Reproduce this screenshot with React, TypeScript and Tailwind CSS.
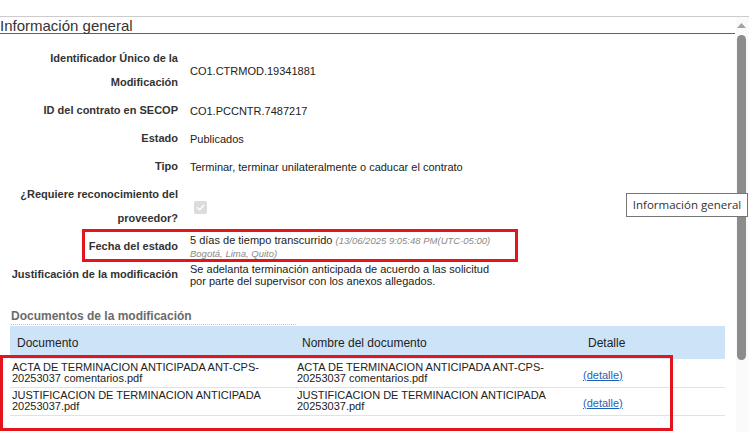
import React from "react"

/**
 * Ficha "Información general" de una modificación de contrato (SECOP).
 * Tabla de etiquetas/valores + tabla de documentos, con las marcas
 * rojas de anotación y el tooltip del navegador encima.
 */

type Field = { label: React.ReactNode; value: React.ReactNode }

const fields: Field[] = [
  { label: "Identificador Único de la Modificación", value: "CO1.CTRMOD.19341881" },
  { label: "ID del contrato en SECOP", value: "CO1.PCCNTR.7487217" },
  { label: "Estado", value: "Publicados" },
  { label: "Tipo", value: "Terminar, terminar unilateralmente o caducar el contrato" },
  {
    label: "¿Requiere reconocimiento del proveedor?",
    value: (
      <span className="ml-[4px] flex h-[13px] w-[13px] items-center justify-center rounded-[2px] bg-[#dcdcdc]">
        <svg width="9" height="9" viewBox="0 0 10 10" fill="none">
          <path d="M1.5 5.2 4 7.6 8.6 2.4" stroke="#ffffff" strokeWidth="1.6" strokeLinecap="round" strokeLinejoin="round" />
        </svg>
      </span>
    ),
  },
  {
    label: "Fecha del estado",
    value: (
      <>
        5 días de tiempo transcurrido{" "}
        <span className="text-[9.5px] italic text-[#8a8a8a]">
          (13/06/2025 9:05:48 PM(UTC-05:00) Bogotá, Lima, Quito)
        </span>
      </>
    ),
  },
  {
    label: "Justificación de la modificación",
    value: "Se adelanta terminación anticipada de acuerdo a las solicitud por parte del supervisor con los anexos allegados.",
  },
]

const docs = [
  {
    doc: "ACTA DE TERMINACION ANTICIPADA ANT-CPS-20253037 comentarios.pdf",
    name: "ACTA DE TERMINACION ANTICIPADA ANT-CPS-20253037 comentarios.pdf",
  },
  {
    doc: "JUSTIFICACION DE TERMINACION ANTICIPADA 20253037.pdf",
    name: "JUSTIFICACION DE TERMINACION ANTICIPADA 20253037.pdf",
  },
]

export default function App() {
  return (
    <div className="relative h-[447px] w-[755px] overflow-hidden bg-white font-['Liberation_Sans',Arial,sans-serif] text-[#222]">
      <div className="h-4" />
      <div className="flex w-[749px] border-t border-[#cccccc]">
        <main className="w-[736px]">
          <h2 className="h-[17px] w-[735px] border-b border-[#2b6cb0] text-[15px] leading-[17px] text-[#333]">
            Información general
          </h2>

          <table className="mt-[10px] border-collapse">
            <tbody>
              {fields.map((f, i) => (
                <tr key={i}>
                  <td className="w-[178px] py-[2px] pl-[8px] text-right align-middle text-[11px] font-bold leading-[24px] text-[#333]">
                    {f.label}
                  </td>
                  <td className="w-[317px] pl-[12px] pt-[2px] align-middle text-[11px] leading-[12px]">{f.value}</td>
                </tr>
              ))}
            </tbody>
          </table>

          <div className="ml-[11px] mt-[20px] w-[285px] border-b border-dotted border-[#c8c8c8] text-[12px] font-bold leading-[16px] text-[#6b6b6b]">
            Documentos de la modificación
          </div>

          <table className="ml-[10px] mt-px w-[715px] table-fixed border-collapse">
            <colgroup>
              <col className="w-[285px]" />
              <col className="w-[286px]" />
              <col className="w-[144px]" />
            </colgroup>
            <thead>
              <tr className="h-[33px] bg-[#cde3f8] text-left text-[12px] font-normal">
                <th className="pl-[7px] font-normal">Documento</th>
                <th className="pl-[7px] font-normal">Nombre del documento</th>
                <th className="pl-[7px] font-normal">Detalle</th>
              </tr>
            </thead>
            <tbody className="text-[11px] leading-[11px]">
              {docs.map((d, i) => (
                <tr key={i} className="h-[28px] border-b border-[#e2e2e2]">
                  <td className="pl-[2px] pr-[12px] align-middle">{d.doc}</td>
                  <td className="pl-[2px] pr-[12px] align-middle">{d.name}</td>
                  <td className="pl-[2px] pt-[5px] align-middle">
                    <a href="#" className="text-[#1f5fb8] underline">
                      (detalle)
                    </a>
                  </td>
                </tr>
              ))}
            </tbody>
          </table>
        </main>

        {/* barra de desplazamiento */}
        <div className="flex h-[415px] w-[13px] flex-col items-center bg-[#fafafa] pt-[6px]">
          <svg width="9" height="5" viewBox="0 0 9 5" className="-ml-[2px]">
            <path d="M4.5 0 9 5H0Z" fill="#a3a3a3" />
          </svg>
          <div className="-ml-[2px] mt-[7px] h-[325px] w-[9px] rounded-full bg-[#8c8c8c]" />
        </div>
      </div>

      {/* anotaciones */}
      <div className="absolute left-[82px] top-[229px] h-[33px] w-[436px] border-[3px] border-[#e3141c]" />
      <div className="absolute left-0 top-[355px] h-[76px] w-[673px] border-[3px] border-[#e3141c]" />

      {/* tooltip */}
      <div className="absolute left-[626px] top-[193px] w-[122px] border border-[#767676] bg-white py-[3px] text-center font-['Open_Sans',sans-serif] text-[11.5px] leading-[16px] text-[#333]">
        Información general
      </div>
    </div>
  )
}
